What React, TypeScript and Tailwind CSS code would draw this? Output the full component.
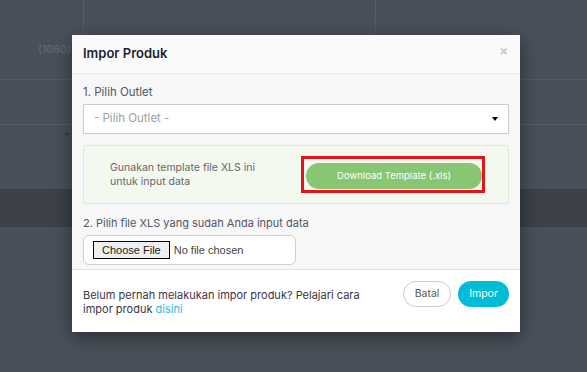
import React from 'react';

const font = { fontFamily: 'Inter, "Noto Sans", sans-serif' };
const arial = { fontFamily: '"Liberation Sans", Arial, sans-serif' };

const BackgroundPage: React.FC = () => (
  <div className="flex flex-col w-full h-full">
    <div className="flex h-[35px]">
      <div className="w-[84px] border-r border-[#555c66]" />
      <div className="w-[292px] border-r border-[#555c66]" />
      <div className="flex-1" />
    </div>
    <div className="h-[45px] border-b border-[#4f5b68] pl-[38px] pt-[7px] text-[10.5px] font-semibold text-[#5f6570]">
      (1060)
    </div>
    <div className="h-[45px] border-b border-[#555b64]" />
    <div className="h-[64px] pl-[64px] pt-[8px]">
      <div className="w-0 h-0 border-l-[3px] border-r-[3px] border-t-[4px] border-l-transparent border-r-transparent border-t-[#3a3f47]" />
    </div>
    <div className="h-[38px] bg-[#3b4049]" />
    <div className="flex-1" />
  </div>
);

export default function App() {
  return (
    <div className="relative w-[587px] h-[372px] overflow-hidden bg-[#4a505a]" style={font}>
      <BackgroundPage />

      <div className="absolute left-[72px] top-[35px] w-[448px] bg-white shadow-[0_5px_18px_rgba(0,0,0,0.45)]">
        <div className="h-[39px] bg-[#fafafa] border-b border-[#e6e6e6] px-[11px] flex items-center justify-between">
          <h4 className="text-[13px] font-semibold text-[#1e2330]">Impor Produk</h4>
          <span className="text-[13px] font-bold leading-none text-[#c9c9c9] mr-[1px] -mt-[6px]">×</span>
        </div>

        <div className="bg-[#f7f7f7] px-[11px] pt-[10px] pb-[4px]">
          <div className="text-[11.5px] leading-[16px] text-[#555566]">1. Pilih Outlet</div>
          <div className="mt-[4px] h-[30px] bg-white border border-[#cccccc] flex items-center justify-between pl-[10px] pr-[10px]">
            <span className="text-[11.5px] text-[#a0a0a0]">- Pilih Outlet -</span>
            <span className="w-0 h-0 border-l-[3.5px] border-r-[3.5px] border-t-[4px] border-l-transparent border-r-transparent border-t-black" />
          </div>

          <div className="mt-[11px] h-[59px] bg-[#f3f9ee] border border-[#dcecd2] rounded-[2px] flex items-center pl-[26px] pr-[23px]">
            <p className="w-[175px] text-[10.5px] leading-[14px] text-[#666670]">
              Gunakan template file XLS ini untuk input data
            </p>
            <div className="ml-auto border-[3px] border-[#e3141b] pl-[2px] pr-[0px] pt-[2px] pb-[1px]">
              <button className="w-[176px] h-[26px] rounded-full bg-[#88c673] text-white text-[9.5px]">
                Download Template (.xls)
              </button>
            </div>
          </div>

          <div className="mt-[11px] text-[11px] leading-[16px] text-[#555566]">
            2. Pilih file XLS yang sudah Anda input data
          </div>
          <div className="mt-[4px] w-[213px] h-[30px] bg-white border border-[#cfcfcf] rounded-[6px] flex items-center pl-[9px]">
            <span
              className="h-[18px] px-[8px] flex items-center border border-black bg-[#efefef] text-[11px] text-[#222]"
              style={arial}
            >
              Choose File
            </span>
            <span className="ml-[4px] text-[11px] text-[#444]" style={arial}>
              No file chosen
            </span>
          </div>
        </div>

        <div className="h-[63px] border-t border-[#e3e3e3] px-[11px] flex items-start">
          <div className="mt-[18px] text-[11px] leading-[14px] text-[#3b3549]">
            <div>Belum pernah melakukan impor produk? Pelajari cara</div>
            <div>
              impor produk <a className="text-[#38b8d8]">disini</a>
            </div>
          </div>
          <div className="ml-auto mt-[11px] flex gap-[7px]">
            <button className="w-[48px] h-[26px] rounded-full border border-[#cccccc] bg-white text-[10.5px] text-[#555]">
              Batal
            </button>
            <button className="w-[51px] h-[26px] rounded-full bg-[#00bcd6] text-white text-[10.5px]">
              Impor
            </button>
          </div>
        </div>
      </div>
    </div>
  );
}
